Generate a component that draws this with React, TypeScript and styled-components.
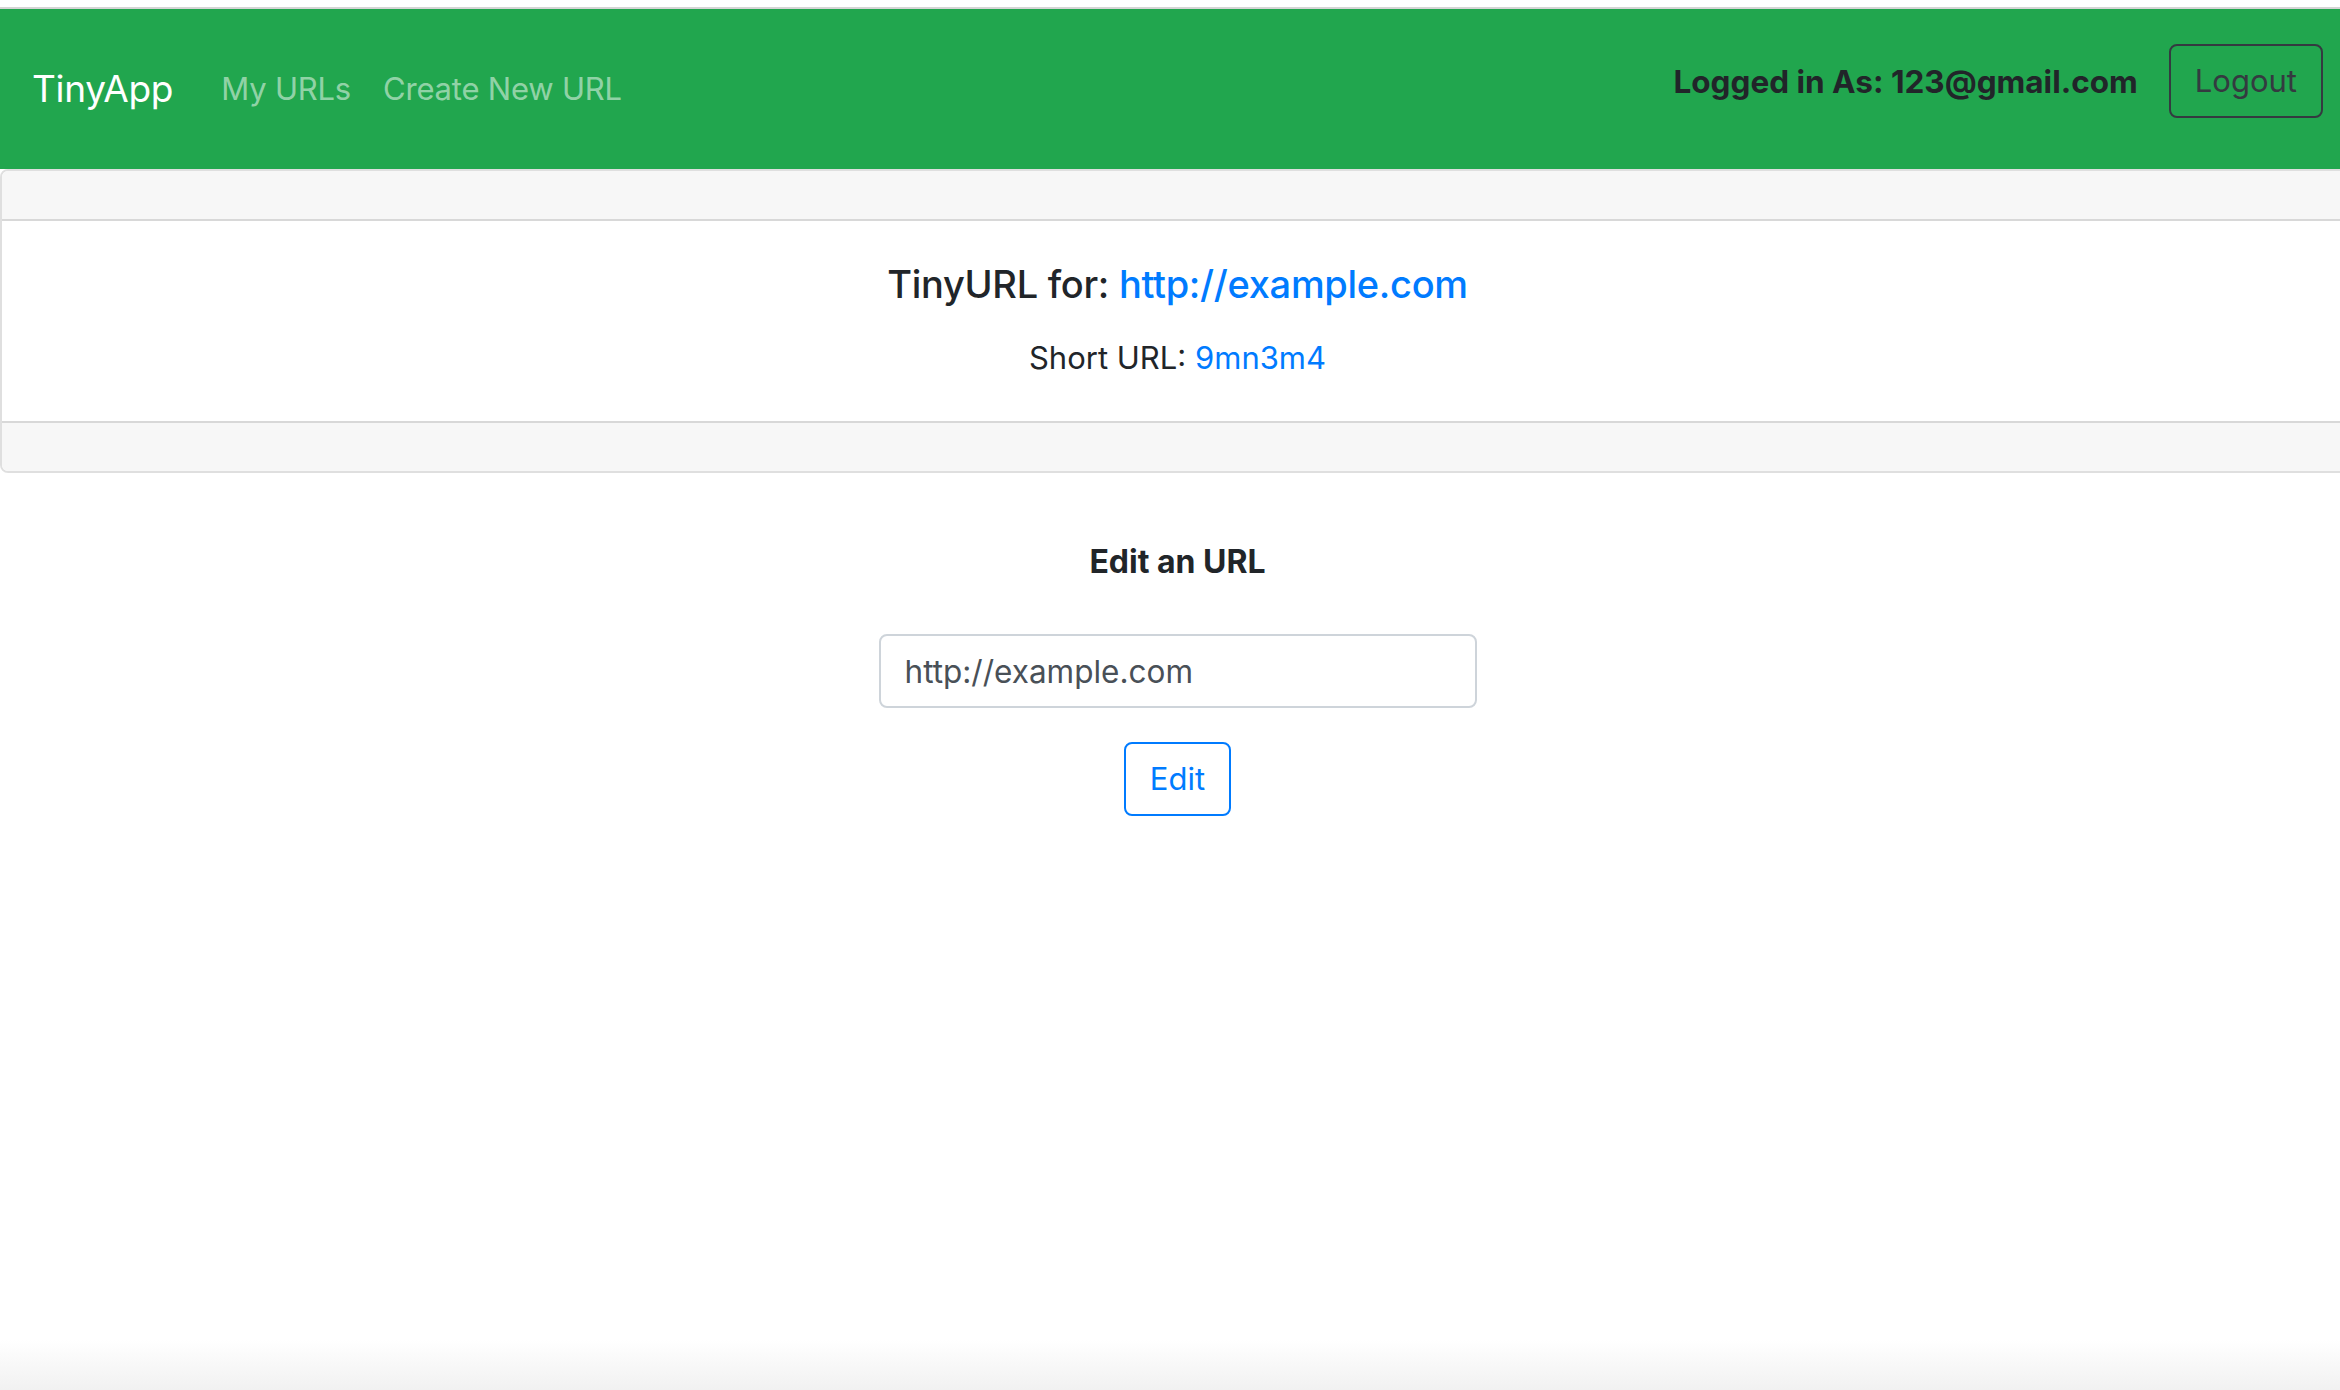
import React from "react";
import styled, { createGlobalStyle } from "styled-components";

const GlobalStyle = createGlobalStyle`
  html, body {
    margin: 0;
    padding: 0;
    overflow: hidden;
    background: #ffffff;
  }
  * { box-sizing: border-box; }
  body {
    font-family: Inter, "Noto Sans", "Liberation Sans", sans-serif;
    color: #212529;
  }
`;

const Page = styled.div`
  width: 2355px;
  min-height: 1390px;
  padding-top: 7px;
  background: linear-gradient(to bottom, #ffffff 0, #ffffff 1340px, #f1f1f1 1390px);
  display: flex;
  flex-direction: column;
`;

const Navbar = styled.nav`
  height: 162px;
  border-top: 2px solid #d4d4d4;
  background: #21a64e;
  display: flex;
  align-items: center;
  justify-content: space-between;
  padding: 0 32px;
`;

const NavLeft = styled.div`
  display: flex;
  align-items: center;
`;

const Brand = styled.a`
  font-size: 37px;
  letter-spacing: -0.3px;
  line-height: 60px;
  color: #ffffff;
  text-decoration: none;
  margin-right: 32px;
`;

const NavLink = styled.a`
  font-size: 31px;
  letter-spacing: -0.2px;
  line-height: 48px;
  padding: 0 16px;
  color: rgba(255, 255, 255, 0.52);
  text-decoration: none;
`;

const NavRight = styled.div`
  display: flex;
  align-items: center;
  gap: 31px;
  margin-bottom: 16px;
`;

const UserLabel = styled.span`
  font-size: 31.5px;
  font-weight: 700;
  color: #212529;
`;

const OutlineButton = styled.button<{ $tone: string }>`
  font-family: inherit;
  font-size: 31px;
  line-height: 46px;
  padding: 12px 24px;
  background: transparent;
  color: ${(p) => p.$tone};
  border: 2px solid ${(p) => p.$tone};
  border-radius: 8px;
  cursor: pointer;
`;

const Card = styled.section`
  border: 2px solid rgba(0, 0, 0, 0.125);
  border-radius: 8px;
  display: flex;
  flex-direction: column;
  overflow: hidden;
`;

const CardBand = styled.div<{ $edge: "top" | "bottom" }>`
  height: 50px;
  background: #f7f7f7;
  ${(p) =>
    p.$edge === "top"
      ? "border-bottom: 2px solid rgba(0,0,0,0.125);"
      : "border-top: 2px solid rgba(0,0,0,0.125);"}
`;

const CardBody = styled.div`
  padding: 39px 40px 39px;
  text-align: center;
`;

const CardTitle = styled.h5`
  margin: 0 0 26px;
  font-size: 38px;
  letter-spacing: -0.3px;
  font-weight: 500;
  line-height: 48px;
`;

const CardText = styled.p`
  margin: 0;
  font-size: 31px;
  line-height: 48px;
`;

const Link = styled.a`
  color: #007bff;
  text-decoration: none;
`;

const EditSection = styled.section`
  display: flex;
  flex-direction: column;
  align-items: center;
  padding-top: 70px;
`;

const EditHeading = styled.h3`
  margin: 0 0 53px;
  font-size: 32px;
  font-weight: 700;
  line-height: 38px;
`;

const EditForm = styled.form`
  display: flex;
  flex-direction: column;
  align-items: center;
  gap: 34px;
`;

const UrlInput = styled.input`
  width: 598px;
  height: 74px;
  padding: 0 24px;
  font-family: inherit;
  font-size: 31.5px;
  color: #495057;
  border: 2px solid #ced4da;
  border-radius: 8px;
  outline: none;
`;

export default function App() {
  return (
    <>
      <GlobalStyle />
      <Page>
        <Navbar>
          <NavLeft>
            <Brand href="#">TinyApp</Brand>
            <NavLink href="#">My URLs</NavLink>
            <NavLink href="#">Create New URL</NavLink>
          </NavLeft>
          <NavRight>
            <UserLabel>Logged in As: 123@gmail.com</UserLabel>
            <OutlineButton $tone="#343a40">Logout</OutlineButton>
          </NavRight>
        </Navbar>
        <Card>
          <CardBand $edge="top" />
          <CardBody>
            <CardTitle>
              TinyURL for: <Link href="#">http://example.com</Link>
            </CardTitle>
            <CardText>
              Short URL: <Link href="#">9mn3m4</Link>
            </CardText>
          </CardBody>
          <CardBand $edge="bottom" />
        </Card>
        <EditSection>
          <EditHeading>Edit an URL</EditHeading>
          <EditForm onSubmit={(e) => e.preventDefault()}>
            <UrlInput type="text" defaultValue="http://example.com" />
            <OutlineButton $tone="#007bff" type="submit">
              Edit
            </OutlineButton>
          </EditForm>
        </EditSection>
      </Page>
    </>
  );
}
